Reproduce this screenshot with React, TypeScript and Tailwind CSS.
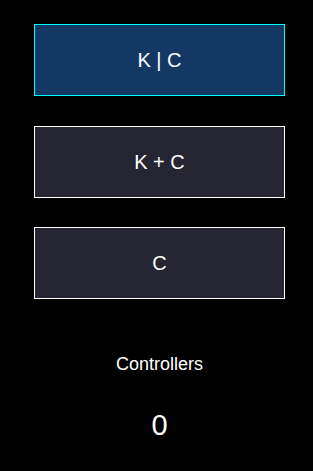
export default function App() {
  const modes = [
    { label: 'K | C', active: true },
    { label: 'K + C', active: false },
    { label: 'C', active: false },
  ];

  return (
    <main
      className="min-h-[471px] w-full bg-black pt-[24px] text-white"
      style={{ fontFamily: '"Liberation Sans", Arial, sans-serif' }}
    >
      <div className="ml-[34px] flex w-[251px] flex-col items-center">
        <div className="flex w-full flex-col gap-[29.5px]">
          {modes.map((m) => (
            <button
              key={m.label}
              type="button"
              className={
                m.active
                  ? 'flex h-[72px] w-full items-center justify-center border border-[#00ffff] bg-[#143864] text-[20px] leading-none text-white'
                  : 'flex h-[72px] w-full items-center justify-center border border-white bg-[#262632] text-[20px] leading-none text-white'
              }
            >
              {m.label}
            </button>
          ))}
        </div>

        <p className="mt-[55px] text-[18px] leading-[21px]">Controllers</p>
        <p className="mt-[34px] text-[29px] leading-[33px]">0</p>
      </div>
    </main>
  );
}
